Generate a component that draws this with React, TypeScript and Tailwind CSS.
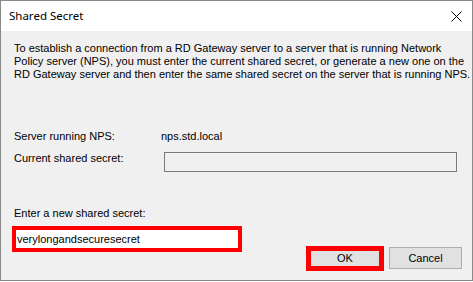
const body = { fontFamily: '"Liberation Sans", Arial, sans-serif' };

function CloseIcon() {
  return (
    <svg width="11" height="11" viewBox="0 0 11 11" className="block">
      <path d="M0.5 0.5 L10.5 10.5 M10.5 0.5 L0.5 10.5" stroke="#000" strokeWidth="1" fill="none" />
    </svg>
  );
}

export default function App() {
  return (
    <div className="w-[473px] h-[282px] bg-white overflow-hidden">
      <div className="w-[473px] h-[281px] border border-[#8a8a8a] flex flex-col">
        {/* title bar */}
        <div className="h-[30px] bg-white flex items-center justify-between pl-[8px] pr-[10px] shrink-0">
          <span className="text-[11.5px] text-black" style={{ fontFamily: '"Noto Sans", "Open Sans", sans-serif' }}>
            Shared Secret
          </span>
          <CloseIcon />
        </div>

        {/* client area */}
        <div className="flex-1 bg-[#f0f0f0] pl-[13px] text-[11px] leading-[13px] text-black flex flex-col" style={body}>
          <p className="mt-[11px] whitespace-nowrap">
            To establish a connection from a RD Gateway server to a server that is running Network
            <br />
            Policy server (NPS), you must enter the current shared secret, or generate a new one on the
            <br />
            RD Gateway server and then enter the same shared secret on the server that is running NPS.
          </p>

          <div className="mt-[49px] flex">
            <span className="w-[147px]">Server running NPS:</span>
            <span>nps.std.local</span>
          </div>

          <div className="mt-[9px] flex items-start">
            <span className="w-[150px]">Current shared secret:</span>
            <div className="w-[293px] h-[20px] border border-[#7a7a7a] bg-[#f0f0f0]" />
          </div>

          <div className="mt-[35px]">Enter a new shared secret:</div>

          <div className="mt-[6px] flex items-start">
            <div className="ml-[-2px] w-[230px] h-[26px] border-[4px] border-[#ff0000] bg-white flex items-center pl-[1px]">
              <span>verylongandsecuresecret</span>
            </div>
            <div className="ml-[64px] mt-[20px] w-[78px] h-[25px] border-[5px] border-[#ff0000] bg-[#e1e1e1] flex items-center justify-center">
              OK
            </div>
            <div className="ml-[5px] mt-[21px] w-[73px] h-[22px] border border-[#adadad] bg-[#e1e1e1] flex items-center justify-center">
              Cancel
            </div>
          </div>
        </div>
      </div>
    </div>
  );
}
